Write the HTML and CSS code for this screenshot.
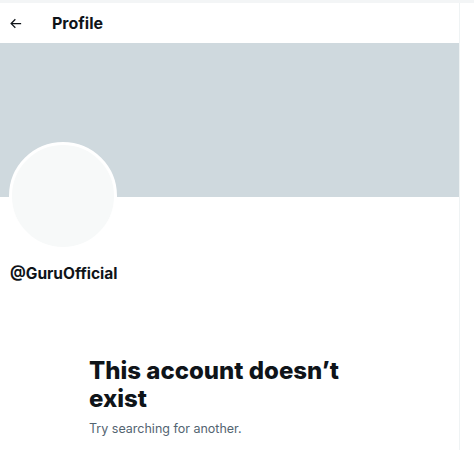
FILE: index.html
```html
<!DOCTYPE html>
<html>
<head>
    <title>Profile</title>
    <link rel="stylesheet" href="styles.css">
</head>
<body>
    <div class="topline"></div>
    <div class="page">
        <main class="column">
            <header class="header">
                <button class="back" aria-label="Back">
                    <svg viewBox="0 0 24 24" width="15" height="15"><path d="M7.414 13l5.043 5.04-1.414 1.42L3.586 12l7.457-7.46 1.414 1.42L7.414 11H21v2H7.414z"></path></svg>
                </button>
                <h2 class="title">Profile</h2>
            </header>
            <div class="banner"></div>
            <div class="profile">
                <div class="avatar"></div>
                <div class="handle">@GuruOfficial</div>
            </div>
            <div class="empty">
                <h1>This account doesn’t exist</h1>
                <p>Try searching for another.</p>
            </div>
        </main>
        <aside class="side"></aside>
    </div>
</body>
</html>
```

FILE: styles.css
```css
body {
    margin: 0;
    background-color: #fff;
    font-family: Inter, 'Noto Sans', sans-serif;
    color: #0f1419;
}

.topline {
    height: 3px;
    background-color: #f3f5f6;
}

.page {
    display: flex;
}

.column {
    width: 459px;
    border-right: 1px solid #eff3f4;
    min-height: 447px;
}

.header {
    height: 40px;
    display: flex;
    align-items: center;
    padding: 0 8px;
    gap: 29px;
}

.back {
    border: none;
    background: none;
    padding: 0;
    width: 15px;
    height: 15px;
    display: flex;
}

.back svg {
    fill: #0f1419;
}

.title {
    margin: 0;
    font-size: 16px;
    font-weight: 700;
}

.banner {
    height: 154px;
    background-color: #cfd9de;
}

.profile {
    padding: 0 10px;
}

.avatar {
    width: 102px;
    height: 102px;
    border-radius: 50%;
    background-color: #f7f9f9;
    border: 3px solid #fff;
    margin-top: -55px;
    margin-left: -1px;
}

.handle {
    margin-top: 14px;
    font-size: 15.5px;
    font-weight: 700;
}

.empty {
    padding: 74px 0 0 89px;
}

.empty h1 {
    margin: 0;
    font-size: 24px;
    line-height: 28px;
    font-weight: 800;
    width: 300px;
}

.empty p {
    margin: 8px 0 0;
    font-size: 12.5px;
    color: #536471;
}
```
